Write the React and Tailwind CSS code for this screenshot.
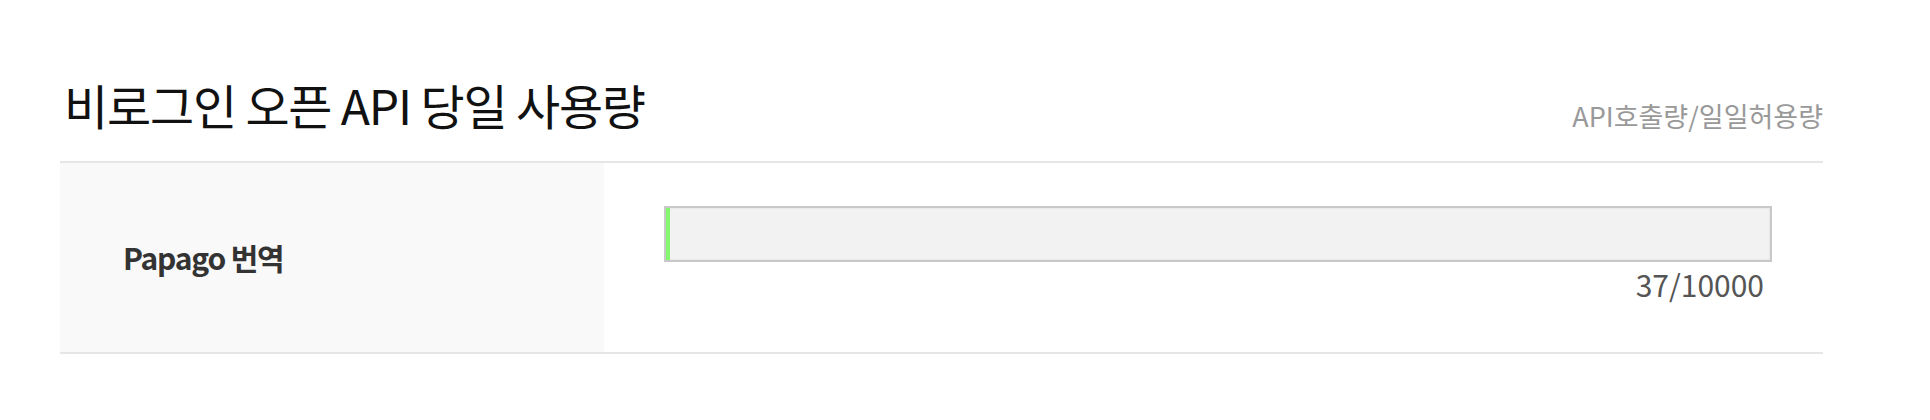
import React from "react";

const usage = [{ name: "Papago 번역", used: 37, limit: 10000 }];

export default function App() {
  return (
    <div className="h-[420px] bg-white pl-[60px] pr-[107px] pt-[77px] font-['Noto_Sans_CJK_KR',sans-serif]">
      {/* Header */}
      <div className="flex items-end justify-between pb-[26px]">
        <h2 className="mb-[4px] text-[48px] leading-[54px] tracking-[-0.025em] text-[#111] pl-[4px]">
          비로그인 오픈 API 당일 사용량
        </h2>
        <span className="mb-[2px] text-[27px] leading-[34px] text-[#999]">
          API호출량/일일허용량
        </span>
      </div>

      {/* Usage rows */}
      <div className="border-t-2 border-[#e6e6e6]">
        {usage.map((item) => (
          <div
            key={item.name}
            className="flex h-[191px] border-b-2 border-[#e6e6e6]"
          >
            <div className="w-[544px] bg-[#f9f9f9] flex items-center pl-[63px]">
              <span className="text-[30px] font-bold tracking-[-0.04em] text-[#333]">
                {item.name}
              </span>
            </div>
            <div className="flex-1 pl-[60px] pr-[51px] pt-[43px]">
              <div className="h-[56px] border-2 border-[#c8c8c8] bg-[#f2f2f2] shadow-[inset_0_0_2px_rgba(0,0,0,0.12)] flex">
                <div
                  className="h-full bg-[#84f86e] min-w-[4px]"
                  style={{ width: `${(item.used / item.limit) * 100}%` }}
                />
              </div>
              <p className="mt-[4px] pr-[8px] text-right text-[30px] leading-[36px] text-[#555]">
                {item.used}/{item.limit}
              </p>
            </div>
          </div>
        ))}
      </div>
    </div>
  );
}
